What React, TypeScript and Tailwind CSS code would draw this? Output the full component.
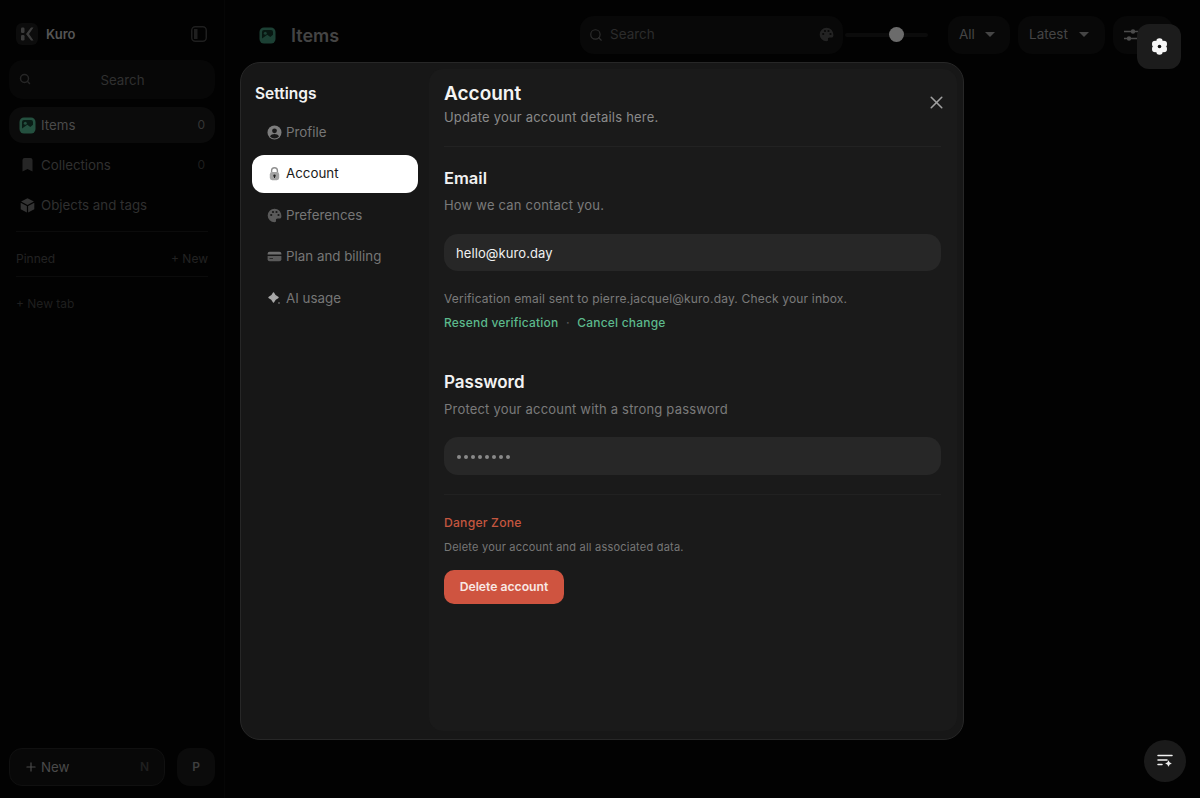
import React from "react";
import { Search, X, Plus } from "lucide-react";

const PhotoIcon = ({ base = "#24503f", dark = "#0a1c16" }: { base?: string; dark?: string }) => (
  <svg width="17" height="17" viewBox="0 0 17 17" fill="none">
    <rect x="0.500" y="0.500" width="16" height="16" rx="4.500" fill={base} />
    <path d="M5 3h7a2 2 0 0 1 2 2v2.800l-2.700 2.200-3-2.200L3 11.500V5a2 2 0 0 1 2-2z" fill={dark} />
    <circle cx="6.300" cy="6.300" r="1.500" fill={base} />
  </svg>
);

const KuroLogo = () => (
  <svg width="22" height="22" viewBox="0 0 22 22" fill="none">
    <rect width="22" height="22" rx="6" fill="#0c0c0c" />
    <rect x="5" y="4.500" width="3.500" height="5.500" rx="1.200" fill="#3c3c3c" />
    <rect x="5" y="12" width="3.500" height="5.500" rx="1.200" fill="#3c3c3c" />
    <path d="M10 11L15 4.500h2.500L13 11l4.500 6.500H15z" fill="#3c3c3c" />
  </svg>
);

const PanelIcon = () => (
  <svg width="16" height="16" viewBox="0 0 16 16" fill="none">
    <rect x="0.750" y="0.750" width="14.500" height="14.500" rx="3.500" stroke="#1f1f1f" strokeWidth="1.500" />
    <path d="M3 3h3.500v10H3z" fill="#1f1f1f" />
  </svg>
);

const BookmarkIcon = () => (
  <svg width="17" height="17" viewBox="0 0 17 17" fill="none">
    <path d="M3.500 3a2 2 0 0 1 2-2h6a2 2 0 0 1 2 2v11.500L8.500 12l-5 2.500z" fill="#262626" />
  </svg>
);

const CubeIcon = () => (
  <svg width="17" height="17" viewBox="0 0 17 17" fill="none">
    <path d="M8.500 1.200l6.400 3.400-6.400 3.300-6.400-3.300z" fill="#333" />
    <path d="M1.700 5.800l6.200 3.200v6.600l-6.200-3.400z" fill="#333" />
    <path d="M15.300 5.800L9.100 9v6.600l6.200-3.400z" fill="#333" />
  </svg>
);

const ProfileIcon = () => (
  <svg width="15" height="15" viewBox="0 0 15 15" fill="none">
    <circle cx="7.500" cy="7.500" r="7" fill="#7d7d7d" />
    <circle cx="7.500" cy="5.800" r="2.400" fill="#191919" />
    <path d="M3 11.400c.9-1.700 2.600-2.400 4.500-2.400s3.600.7 4.500 2.400a6 6 0 0 1-9 0z" fill="#191919" />
  </svg>
);

const LockIcon = () => (
  <svg width="15" height="15" viewBox="0 0 15 15" fill="none">
    <path d="M4.600 6.500V4.600a2.900 2.900 0 0 1 5.800 0v1.900" stroke="#8f8f8f" strokeWidth="1.400" />
    <rect x="2.800" y="6" width="9.400" height="8.200" rx="2.400" fill="#a3a3a3" />
    <circle cx="7.500" cy="9.700" r="1.200" fill="#222" />
    <rect x="7" y="10" width="1" height="2" fill="#222" />
  </svg>
);

const PaletteIcon = ({ color = "#5a5a5a", hole = "#181818" }: { color?: string; hole?: string }) => (
  <svg width="15" height="15" viewBox="0 0 15 15" fill="none">
    <path d="M7.500.7a6.800 6.800 0 1 0 0 13.600c1.200 0 1.700-.8 1.500-1.700-.3-1.200.4-2 1.600-2h1.800c1.200 0 2-.8 2-2.100C14.400 3.600 11.400.7 7.500.7z" fill={color} />
    <circle cx="4.200" cy="7" r="1.100" fill={hole} />
    <circle cx="6" cy="4" r="1.100" fill={hole} />
    <circle cx="9.500" cy="4" r="1.100" fill={hole} />
    <circle cx="11.500" cy="7" r="1.100" fill={hole} />
  </svg>
);

const CardIcon = () => (
  <svg width="15" height="15" viewBox="0 0 15 15" fill="none">
    <path d="M.6 4.800a2 2 0 0 1 2-2h9.800a2 2 0 0 1 2 2v.7H.6z" fill="#6e6e6e" />
    <path d="M.6 7h13.800v3.200a2 2 0 0 1-2 2H2.600a2 2 0 0 1-2-2z" fill="#5a5a5a" />
    <rect x="2.500" y="9" width="3.500" height="1" fill="#2b2b2b" />
  </svg>
);

const SparkIcon = () => (
  <svg width="15" height="15" viewBox="0 0 15 15" fill="none">
    <path d="M6.500 2c.9 2.400 2 3.600 4.500 4.500-2.500.9-3.600 2.100-4.500 4.500-.9-2.400-2-3.600-4.500-4.500C4.500 5.600 5.600 4.400 6.500 2z" fill="#a8a8a8" stroke="#a8a8a8" strokeWidth="1.400" strokeLinejoin="round" />
    <circle cx="12" cy="12" r="0.900" fill="#666" />
  </svg>
);

const SlidersIcon = () => (
  <svg width="16" height="16" viewBox="0 0 16 16" fill="none">
    <path d="M1 4.500h14M1 11.500h14" stroke="#4c4c4c" strokeWidth="1.300" />
    <circle cx="10" cy="4.500" r="2.200" fill="#4c4c4c" />
    <circle cx="6" cy="11.500" r="2.200" fill="#4c4c4c" />
  </svg>
);

const FlowerGear = () => (
  <svg width="19" height="19" viewBox="0 0 20 20" fill="none">
    <g fill="#f6f6f6">
      <circle cx="10" cy="4.800" r="3.400" />
      <circle cx="14.500" cy="7.400" r="3.400" />
      <circle cx="14.500" cy="12.600" r="3.400" />
      <circle cx="10" cy="15.200" r="3.400" />
      <circle cx="5.500" cy="12.600" r="3.400" />
      <circle cx="5.500" cy="7.400" r="3.400" />
      <circle cx="10" cy="10" r="5" />
    </g>
    <circle cx="10" cy="10" r="1.900" fill="#111111" />
  </svg>
);

const ListSparkIcon = () => (
  <svg width="18" height="18" viewBox="0 0 18 18" fill="none">
    <path d="M2 3.500h14M2 8h9M2 12.500h4" stroke="#f2f2f2" strokeWidth="1.500" strokeLinecap="round" />
    <path d="M12.500 8.800c.3 1.700 1 2.400 2.700 2.700-1.700.3-2.400 1-2.700 2.700-.3-1.700-1-2.400-2.700-2.700 1.700-.3 2.400-1 2.700-2.700z" fill="#f2f2f2" stroke="#f2f2f2" strokeWidth="1" strokeLinejoin="round" />
  </svg>
);

const NavRow = ({
  icon,
  label,
  count,
  active,
}: {
  icon: React.ReactNode;
  label: string;
  count?: string;
  active?: boolean;
}) => (
  <div
    className={`flex h-9 items-center rounded-[14px] px-[10px] text-[13.300px] ${
      active ? "bg-[#0b0b0b] text-[#4a4a4a]" : "text-[#303030]"
    }`}
  >
    <span className="w-[22px] shrink-0">{icon}</span>
    <span className="pt-[2px]">{label}</span>
    {count && <span className={`ml-auto text-[12px] ${active ? "text-[#363636]" : "text-[#1f1f1f]"}`}>{count}</span>}
  </div>
);

const SettingsRow = ({ icon, label, active }: { icon: React.ReactNode; label: string; active?: boolean }) => (
  <div
    className={`flex h-[38px] items-center gap-[4px] rounded-[12px] pl-[15px] text-[13.350px] ${
      active ? "bg-white text-[#1a1a1a]" : "text-[#767676]"
    }`}
  >
    <span className="w-[15px] shrink-0">{icon}</span>
    <span>{label}</span>
  </div>
);

export default function App() {
  return (
    <div
      className="relative flex h-[798px] w-[1200px] overflow-hidden bg-[#020202]"
      style={{ fontFamily: "Inter, 'Liberation Sans', sans-serif" }}
    >
      {/* Sidebar */}
      <aside className="flex w-[225px] shrink-0 flex-col border-r border-[#060606] pb-[12px] pl-[9px] pr-[9px] pt-[22px]">
        <div className="flex h-6 items-center justify-between pl-[7px] pr-[8px]">
          <div className="flex items-center gap-[8px]">
            <KuroLogo />
            <span className="mt-[1px] text-[13px] font-semibold text-[#555555]">Kuro</span>
          </div>
          <PanelIcon />
        </div>
        <div className="relative mt-[14px] flex h-[39px] items-center justify-center rounded-[14px] bg-[#070707] pl-[21px] pt-[2px] text-[13.300px] text-[#303030]">
          <Search size={12} strokeWidth={3} className="absolute left-[10px] top-[13px] text-[#262626]" />
          Search
        </div>
        <div className="mt-[8px] flex flex-col gap-[4px]">
          <NavRow icon={<PhotoIcon />} label="Items" count="0" active />
          <NavRow icon={<BookmarkIcon />} label="Collections" count="0" />
          <NavRow icon={<CubeIcon />} label="Objects and tags" />
        </div>
        <div className="mx-[7px] mt-[8px] border-t border-[#0b0b0b]" />
        <div className="mx-[7px] flex h-[45px] items-center justify-between border-b border-[#0b0b0b] pt-[10px] text-[12px] text-[#222222]">
          <span>Pinned</span>
          <span>+ New</span>
        </div>
        <div className="ml-[7px] mt-[19px] text-[12px] leading-[16px] text-[#1f1f1f]">+ New tab</div>
        <div className="mt-auto flex gap-[12px]">
          <div className="flex h-[38px] w-[157px] items-center rounded-[13px] border border-[#101010] bg-[#080808] pl-[14px] pr-[15px] text-[13.300px] text-[#4a4a4a]">
            <Plus size={14} className="mr-[3px]" />
            <span className="pt-[2px]">New</span>
            <span className="ml-auto text-[12px] font-semibold text-[#1f1f1f]">N</span>
          </div>
          <div className="flex h-[38px] w-[38px] items-center justify-center rounded-[13px] bg-[#0b0b0b] text-[12px] font-semibold text-[#3f3f3f]">
            P
          </div>
        </div>
      </aside>

      {/* Main */}
      <main className="min-w-0 flex-1">
        <header className="flex h-[69px] items-start pl-[34px] pt-[16px]">
          <div className="flex h-[38px] w-[321px] items-center gap-[15px]">
            <PhotoIcon base="#1c4034" dark="#081712" />
            <span className="text-[18px] font-semibold text-[#444444]">Items</span>
          </div>
          <div className="flex h-[38px] w-[263px] items-center rounded-[14px] bg-[#080808] pb-[1px] pl-[9px] pr-[9px] text-[13.500px] text-[#2c2c2c]">
            <Search size={14} className="mr-[7px] text-[#2e2e2e]" />
            Search
            <span className="ml-auto">
              <PaletteIcon color="#232323" hole="#080808" />
            </span>
          </div>
          <div className="relative mx-[2px] mt-[17px] h-[4px] w-[83px] rounded-full bg-[#0b0b0b]">
            <div className="absolute left-[44px] top-[-6px] h-[15px] w-[15px] rounded-full bg-[#6b6b6b]" />
          </div>
          <div className="ml-[18px] flex h-[38px] w-[62px] items-center justify-between rounded-[14px] bg-[#080808] pb-[1px] pl-[11px] pr-[15px] text-[13.500px] text-[#454545]">
            All
            <span className="h-0 w-0 border-x-[5px] border-t-[5px] border-x-transparent border-t-[#454545]" />
          </div>
          <div className="ml-[8px] flex h-[38px] w-[87px] items-center justify-between rounded-[14px] bg-[#080808] pb-[1px] pl-[11px] pr-[16px] text-[13.500px] text-[#454545]">
            Latest
            <span className="h-0 w-0 border-x-[5px] border-t-[5px] border-x-transparent border-t-[#454545]" />
          </div>
          <div className="ml-[8px] flex h-[38px] w-[60px] items-center rounded-[14px] bg-[#080808] pl-[10px]">
            <SlidersIcon />
          </div>
        </header>
      </main>

      {/* Floating gear */}
      <div className="absolute left-[1137px] top-[24px] flex h-[45px] w-[44px] items-center justify-center rounded-[12px] bg-[#1c1c1c]">
        <FlowerGear />
      </div>

      {/* Floating list button */}
      <div className="absolute left-[1144px] top-[740px] flex h-[42px] w-[42px] items-center justify-center rounded-full bg-[#1a1a1a]">
        <ListSparkIcon />
      </div>

      {/* Modal */}
      <div className="absolute left-[240px] top-[62px] flex h-[678px] w-[724px] rounded-[20px] border border-[#272727] bg-[#171717] pb-[8px] pr-[6px] pt-[6px]">
        <nav className="w-[188px] shrink-0 pl-[11px] pr-[11px] pt-[15px]">
          <h2 className="pl-[3px] text-[15.500px] font-semibold leading-[20px] text-[#f2f2f2]">Settings</h2>
          <div className="mt-[9px] flex flex-col gap-[3.500px]">
            <SettingsRow icon={<ProfileIcon />} label="Profile" />
            <SettingsRow icon={<LockIcon />} label="Account" active />
            <SettingsRow icon={<PaletteIcon />} label="Preferences" />
            <SettingsRow icon={<CardIcon />} label="Plan and billing" />
            <SettingsRow icon={<SparkIcon />} label="AI usage" />
          </div>
        </nav>
        <section className="relative flex-1 rounded-[14px] bg-[#1a1a1a] pl-[15px] pr-[16px] pt-[13px]">
          <X size={21} strokeWidth={1.800} className="absolute right-[10px] top-[23px] text-[#a0a0a0]" />
          <h1 className="text-[19px] font-semibold leading-[24px] text-[#f4f4f4]">Account</h1>
          <p className="mt-[1px] text-[13px] leading-[20px] tracking-[0.2px] text-[#8a8a8a]">Update your account details here.</p>
          <div className="mt-[19px] border-t border-[#222222]" />

          <h3 className="mt-[20px] text-[16.500px] font-semibold leading-[22px] text-[#f2f2f2]">Email</h3>
          <p className="mt-[6px] text-[13px] leading-[20px] tracking-[0.2px] text-[#7a7a7a]">How we can contact you.</p>
          <div className="mt-[19px] flex h-[37px] items-center rounded-[14px] bg-[#272727] px-[12px] pt-[2px] text-[13px] tracking-[0.1px] text-[#f0f0f0]">
            hello@kuro.day
          </div>
          <p className="mt-[19px] text-[12px] leading-[18px] tracking-[0.18px] text-[#7a7a7a]">
            Verification email sent to pierre.jacquel@kuro.day. Check your inbox.
          </p>
          <div className="mt-[6px] flex items-center gap-[7.500px] text-[12px] font-medium leading-[18px] tracking-[0.2px] text-[#5cb98c]">
            <span>Resend verification</span>
            <span className="text-[#555555]">·</span>
            <span>Cancel change</span>
          </div>

          <h3 className="mt-[39px] text-[17px] font-semibold leading-[22px] text-[#f2f2f2]">Password</h3>
          <p className="mt-[6px] text-[13px] leading-[20px] tracking-[0.2px] text-[#7a7a7a]">Protect your account with a strong password</p>
          <div className="mt-[18px] flex h-[38px] items-center gap-[3px] rounded-[14px] bg-[#272727] px-[13px] pt-[2px]">
            {Array.from({ length: 8 }).map((_, i) => (
              <span key={i} className="h-[4px] w-[4px] rounded-full bg-[#8a8a8a]" />
            ))}
          </div>
          <div className="mt-[19px] border-t border-[#212121]" />

          <h4 className="mt-[19px] text-[12.200px] font-medium leading-[18px] tracking-[0.2px] text-[#c5563f]">Danger Zone</h4>
          <p className="mt-[6px] text-[11px] leading-[18px] tracking-[0.22px] text-[#777777]">Delete your account and all associated data.</p>
          <button className="mt-[14px] h-[34px] w-[120px] rounded-[10px] bg-[#cf5440] text-[12.200px] font-semibold text-[#f9e8e4]">
            Delete account
          </button>
        </section>
      </div>
    </div>
  );
}
